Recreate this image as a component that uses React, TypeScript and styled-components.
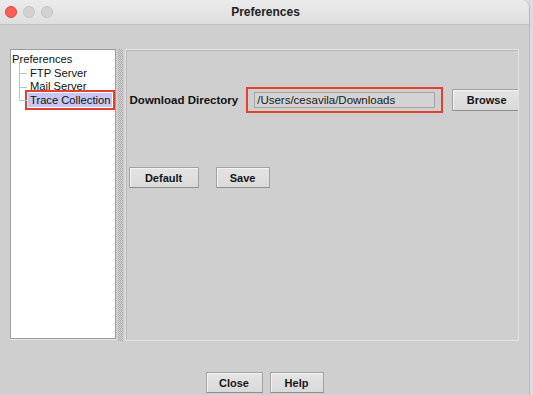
import React from "react";
import styled, { createGlobalStyle } from "styled-components";

const Global = createGlobalStyle`
  html, body { margin: 0; padding: 0; background: #dcdcdf; }
  body { font-family: "Liberation Sans", Arial, sans-serif; }
  * { box-sizing: border-box; }
`;

const Window = styled.div`
  width: 530px;
  height: 395px;
  background: #cfcfcf;
  display: flex;
  flex-direction: column;
  border-right: 1px solid #b9b9b9;
  border-top-right-radius: 8px;
  overflow: hidden;
`;

const TitleBar = styled.div`
  height: 25px;
  flex: none;
  position: relative;
  display: flex;
  align-items: center;
  justify-content: center;
  background: linear-gradient(#ebebeb, #dedede);
  border-bottom: 1px solid #c2c2c2;
`;

const Lights = styled.div`
  position: absolute;
  left: 5px;
  top: 6px;
  display: flex;
  gap: 6px;
`;

const Light = styled.span<{ $red?: boolean }>`
  width: 12px;
  height: 12px;
  border-radius: 50%;
  background: ${(p) => (p.$red ? "#fd5e56" : "#d2d2d2")};
  border: 1px solid ${(p) => (p.$red ? "#e0443e" : "#c4c4c4")};
`;

const Title = styled.div`
  font-weight: bold;
  font-size: 12px;
  color: #222;
  margin-left: 2px;
`;

const Body = styled.div`
  flex: 1;
  display: flex;
  flex-direction: column;
  padding: 24px 10px 0 10px;
`;

const Split = styled.div`
  height: 292px;
  display: flex;
`;

const TreeBox = styled.div`
  width: 106px;
  height: 290px;
  background: #fff;
  border: 1px solid #9c9c9c;
  box-shadow: 0 1px 0 #e6e6e6;
  padding-top: 3px;
  font-size: 11.2px;
  color: #111;
`;

const TreeRow = styled.div`
  height: 13.33px;
  line-height: 13.33px;
  white-space: nowrap;
  padding-left: 1px;
`;

const ChildList = styled.div`
  position: relative;
  &::before {
    content: "";
    position: absolute;
    left: 8px;
    top: -4px;
    height: 37px;
    border-left: 1px solid #b7bfd6;
  }
`;

const ChildRow = styled.div`
  position: relative;
  height: 13.33px;
  display: flex;
  align-items: center;
  padding-left: 17px;
  &::before {
    content: "";
    position: absolute;
    left: 8px;
    top: 7px;
    width: 8px;
    border-top: 1px solid #b7bfd6;
  }
`;

const ChildLabel = styled.span<{ $selected?: boolean }>`
  line-height: 14px;
  padding: 0 2px;
  white-space: nowrap;
  background: ${(p) => (p.$selected ? "#c6c7f3" : "transparent")};
  outline: ${(p) => (p.$selected ? "2px solid #e3402f" : "none")};
  outline-offset: 1px;
`;

const Divider = styled.div`
  width: 9px;
  height: 292px;
  padding: 0 2px 0 2px;
  background-color: #cfcfcf;
  background-image: repeating-conic-gradient(#a8a8a8 0 25%, #d6d6d6 0 50%);
  background-size: 2px 2px;
  background-clip: content-box;
  background-origin: content-box;
`;

const Panel = styled.div`
  width: 396px;
  height: 292px;
  border: 1px solid #e3e3e3;
  box-shadow: inset 1px 1px 0 #b9b9b9;
  padding: 37px 0 0 4px;
  overflow: hidden;
  display: flex;
  flex-direction: column;
`;

const DirRow = styled.div`
  display: flex;
  align-items: center;
  gap: 8px;
`;

const Label = styled.div`
  font-weight: bold;
  font-size: 11.5px;
  color: #111;
  white-space: nowrap;
  width: 109px;
`;

const Highlight = styled.div`
  border: 2px solid #e3402f;
  padding: 3px 6px;
  display: flex;
`;

const Field = styled.div`
  width: 181px;
  height: 16px;
  border: 1px solid #a4a4a4;
  background: #d3d3d3;
  font-size: 11.5px;
  line-height: 14px;
  padding-left: 2px;
  color: #1a1a1a;
  white-space: nowrap;
`;

const Button = styled.button<{ $w: number; $h?: number }>`
  width: ${(p) => p.$w}px;
  height: ${(p) => p.$h ?? 21}px;
  flex: none;
  padding: 0;
  font-family: "Liberation Sans", Arial, sans-serif;
  font-weight: bold;
  font-size: 11px;
  color: #151515;
  background: linear-gradient(#e4e4e4, #dadada);
  border: 1px solid #a2a2a2;
  border-bottom-color: #8f8f8f;
  box-shadow: inset 1px 1px 0 #f3f3f3;
  display: flex;
  align-items: center;
  justify-content: center;
`;

const BrowseWrap = styled.div`
  margin-left: 1px;
`;

const ActionRow = styled.div`
  display: flex;
  gap: 17px;
  margin-top: 54px;
  margin-left: -1px;
`;

const Footer = styled.div`
  display: flex;
  justify-content: center;
  gap: 7px;
  margin-top: 31px;
  margin-left: -10px;
  margin-right: -10px;
`;

export default function App() {
  return (
    <>
      <Global />
      <Window>
        <TitleBar>
          <Lights>
            <Light $red />
            <Light />
            <Light />
          </Lights>
          <Title>Preferences</Title>
        </TitleBar>
        <Body>
          <Split>
            <TreeBox>
              <TreeRow>Preferences</TreeRow>
              <ChildList>
                <ChildRow>
                  <ChildLabel>FTP Server</ChildLabel>
                </ChildRow>
                <ChildRow>
                  <ChildLabel>Mail Server</ChildLabel>
                </ChildRow>
                <ChildRow>
                  <ChildLabel $selected>Trace Collection</ChildLabel>
                </ChildRow>
              </ChildList>
            </TreeBox>
            <Divider />
            <Panel>
              <DirRow>
                <Label>Download Directory</Label>
                <Highlight>
                  <Field>/Users/cesavila/Downloads</Field>
                </Highlight>
                <BrowseWrap>
                  <Button $w={69} $h={22}>Browse</Button>
                </BrowseWrap>
              </DirRow>
              <ActionRow>
                <Button $w={70}>Default</Button>
                <Button $w={54}>Save</Button>
              </ActionRow>
            </Panel>
          </Split>
          <Footer>
            <Button $w={57}>Close</Button>
            <Button $w={54}>Help</Button>
          </Footer>
        </Body>
      </Window>
    </>
  );
}
